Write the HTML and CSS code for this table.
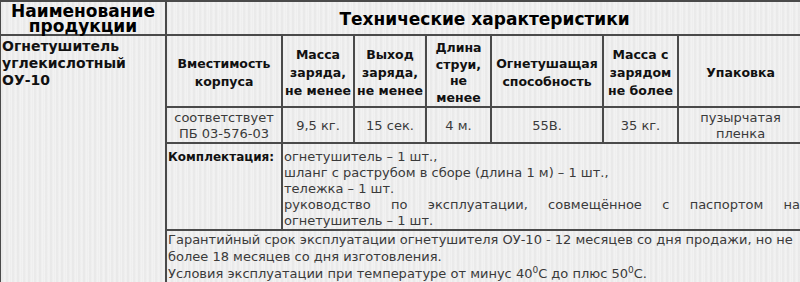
FILE: index.html
```html
<!DOCTYPE html>
<html lang="ru">
<head>
<meta charset="utf-8">
<link rel="stylesheet" href="styles.css">
</head>
<body>
<table class="spec">
  <colgroup>
    <col class="c0"><col class="c1"><col class="c2"><col class="c3"><col class="c4"><col class="c5"><col class="c6"><col class="c7">
  </colgroup>
  <tr class="r-title">
    <th class="h-name">Наименование продукции</th>
    <th class="h-title" colspan="7">Технические характеристики</th>
  </tr>
  <tr class="r-head">
    <td class="product" rowspan="4">Огнетушитель углекислотный ОУ-10</td>
    <th>Вместимость корпуса</th>
    <th>Масса заряда, не менее</th>
    <th>Выход заряда, не менее</th>
    <th class="h-tall">Длина струи, не менее</th>
    <th>Огнетушащая способность</th>
    <th>Масса с зарядом не более</th>
    <th>Упаковка</th>
  </tr>
  <tr class="r-data">
    <td>соответствует ПБ 03-576-03</td>
    <td>9,5 кг.</td>
    <td>15 сек.</td>
    <td>4 м.</td>
    <td>55В.</td>
    <td>35 кг.</td>
    <td>пузырчатая пленка</td>
  </tr>
  <tr class="r-kit">
    <td class="kit-label">Комплектация:</td>
    <td class="kit-list" colspan="6">огнетушитель – 1 шт.,<br>шланг с раструбом в сборе (длина 1 м) – 1 шт.,<br>тележка – 1 шт.<br>руководство по эксплуатации, совмещённое с паспортом на огнетушитель – 1 шт.</td>
  </tr>
  <tr class="r-note">
    <td class="note" colspan="7">Гарантийный срок эксплуатации огнетушителя ОУ-10 - 12 месяцев со дня продажи, но не более 18 месяцев со дня изготовления.<br>Условия эксплуатации при температуре от минус 40<sup>0</sup>С до плюс 50<sup>0</sup>С.</td>
  </tr>
</table>
</body>
</html>
```

FILE: styles.css
```css
html, body {
  margin: 0;
  padding: 0;
  width: 800px;
  height: 282px;
  overflow: hidden;
  background-color: #ededed;
  background-image:
    repeating-linear-gradient(90deg,
      rgba(255,255,255,0.55) 0px, rgba(255,255,255,0) 1px,
      rgba(0,0,0,0.025) 2px, rgba(255,255,255,0) 3px,
      rgba(255,255,255,0.35) 5px, rgba(0,0,0,0.03) 7px,
      rgba(255,255,255,0) 8px, rgba(255,255,255,0.4) 10px,
      rgba(0,0,0,0.02) 11px);
  font-family: "DejaVu Sans", Verdana, sans-serif;
  color: #3a3a3a;
}

.spec {
  border-collapse: collapse;
  table-layout: fixed;
  width: 803px;
  margin: 0 0 0 -1px;
  font-size: 13px;
}

.c0 { width: 166px; }
.c1 { width: 116px; }
.c2 { width: 72px; }
.c3 { width: 72px; }
.c4 { width: 65px; }
.c5 { width: 112px; }
.c6 { width: 75px; }
.c7 { width: 125px; }

.spec th,
.spec td {
  border: 2px solid #4a4a4a;
  padding: 0 1px;
}

.spec th {
  font-weight: bold;
  color: #111;
  text-align: center;
  vertical-align: middle;
}

.spec .r-title th {
  height: 30px;
  font-size: 17px;
  line-height: 15px;
  color: #000;
  padding-top: 2px;
}

.spec .h-title {
  font-size: 18px;
}

.spec .r-head th {
  height: 64px;
  font-size: 12.5px;
  line-height: 18px;
  padding-top: 4px;
}

.spec .r-head .h-tall {
  line-height: 16.5px;
  padding-top: 4px;
}

.spec .product {
  vertical-align: top;
  text-align: left;
  font-weight: bold;
  font-size: 14px;
  line-height: 17px;
  color: #111;
  padding-top: 2px;
}

.spec .r-data td {
  height: 29px;
  text-align: center;
  vertical-align: middle;
  line-height: 16px;
  padding-top: 2px;
}

.spec .kit-label {
  vertical-align: top;
  font-weight: bold;
  font-size: 12px;
  line-height: 16px;
  color: #111;
  padding-top: 5px;
}

.spec .kit-list {
  text-align: justify;
  line-height: 16px;
  padding-top: 5px;
  padding-right: 2px;
  vertical-align: top;
}

.spec .note {
  text-align: left;
  line-height: 17.2px;
  vertical-align: top;
  padding-top: 0;
}

.note sup {
  font-size: 9px;
  line-height: 0;
  vertical-align: 5px;
}
```
